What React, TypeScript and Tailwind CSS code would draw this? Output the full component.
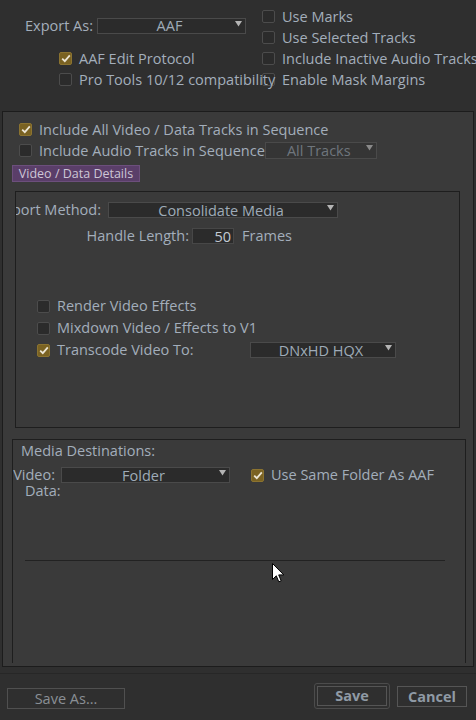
import React from 'react'

const font = { fontFamily: '"Open Sans", "Noto Sans", sans-serif' }

function Check({ checked }: { checked?: boolean }) {
  if (checked) {
    return (
      <span className="flex h-[13px] w-[13px] shrink-0 items-center justify-center rounded-[2px] border border-[#8b7330] bg-[#7a6222]">
        <svg width="10" height="9" viewBox="0 0 10 9">
          <path d="M1.2 4.6 L3.8 7.2 L8.8 1.4" fill="none" stroke="#ece6d6" strokeWidth="1.8" />
        </svg>
      </span>
    )
  }
  return <span className="h-[13px] w-[13px] shrink-0 rounded-[2px] border border-[#4c4c4c] bg-[#2b2b2b]" />
}

function Arrow({ dim }: { dim?: boolean }) {
  return (
    <svg className="absolute right-[3px] top-[2px]" width="7" height="6" viewBox="0 0 7 6">
      <path d="M0 0 L7 0 L3.5 5.5 Z" fill={dim ? '#8a8a8a' : '#b4b4b4'} />
    </svg>
  )
}

function Dropdown({ label, className, dim }: { label: string; className: string; dim?: boolean }) {
  return (
    <div
      className={`relative flex shrink-0 items-center justify-center border leading-none ${
        dim ? 'border-[#4a4a4a] bg-[#353535] text-[#6f767d]' : 'border-[#4a4a4a] bg-[#2b2b2b] text-[#9fabb8]'
      } ${className}`}
    >
      <span className="pr-[4px] pt-[2px]">{label}</span>
      <Arrow dim={dim} />
    </div>
  )
}

function CheckRow({ label, checked, className = '' }: { label: string; checked?: boolean; className?: string }) {
  return (
    <div className={`flex items-center gap-[7px] whitespace-nowrap ${className}`}>
      <Check checked={checked} />
      <span>{label}</span>
    </div>
  )
}

export default function App() {
  return (
    <div
      className="relative h-[720px] w-[476px] overflow-hidden bg-[#2f2f2f] text-[14.5px] leading-[20px] text-[#a3aebb]"
      style={font}
    >
      {/* top options */}
      <div className="flex h-[111px]">
        <div className="relative z-10 w-[262px] shrink-0 pl-[25px] pt-[15px]">
          <div className="flex h-[21px] items-center">
            <span className="w-[72px] whitespace-nowrap">Export As:</span>
            <Dropdown label="AAF" className="h-[16px] w-[149px]" />
          </div>
          <div className="mt-[12px] pl-[34px]">
            <CheckRow label="AAF Edit Protocol" checked className="h-[21px]" />
            <CheckRow label="Pro Tools 10/12 compatibility" className="h-[21px]" />
          </div>
        </div>
        <div className="pt-[6px]">
          <CheckRow label="Use Marks" className="h-[21px]" />
          <CheckRow label="Use Selected Tracks" className="h-[21px]" />
          <CheckRow label="Include Inactive Audio Tracks" className="h-[21px]" />
          <CheckRow label="Enable Mask Margins" className="h-[21px]" />
        </div>
      </div>

      {/* main panel */}
      <div className="ml-[2px] h-[556px] w-[472px] overflow-hidden border border-[#1c1c1c] bg-[#3a3a3a]">
        <div className="pl-[16px] pt-[7px]">
          <CheckRow label="Include All Video / Data Tracks in Sequence" checked className="h-[21px]" />
          <div className="flex h-[21px] items-center">
            <CheckRow label="Include Audio Tracks in Sequence" />
            <Dropdown label="All Tracks" dim className="h-[17px] w-[112px]" />
          </div>
        </div>

        <div className="ml-[9px] mt-[4px] flex h-[17px] w-[128px] items-center justify-center border border-[#6c4f7c] bg-[#5a3e69] pt-[1px] text-[12.5px] leading-none text-[#cdc6d6]">
          Video / Data Details
        </div>

        {/* video / data details box */}
        <div className="ml-[12px] mt-[9px] h-[237px] w-[445px] overflow-hidden border border-[#1e1e1e]">
          <div className="mt-[10px] flex h-[16px] items-center">
            <div className="flex w-[85px] shrink-0 justify-end">
              <span className="whitespace-nowrap">Export Method:</span>
            </div>
            <Dropdown label="Consolidate Media" className="ml-[7px] h-[16px] w-[230px]" />
          </div>
          <div className="mt-[10px] flex h-[16px] items-center">
            <div className="flex w-[173px] shrink-0 justify-end">
              <span className="whitespace-nowrap">Handle Length:</span>
            </div>
            <div className="ml-[3px] flex h-[16px] w-[42px] items-center justify-end border border-[#474747] bg-[#2b2b2b] pr-[2px] pt-[3px] leading-none text-[#c4ccd4]">
              50
            </div>
            <span className="ml-[8px]">Frames</span>
          </div>
          <div className="mt-[51px] pl-[21px]">
            <CheckRow label="Render Video Effects" className="h-[22px]" />
            <CheckRow label="Mixdown Video / Effects to V1" className="h-[22px]" />
            <div className="flex h-[22px] items-center">
              <Check checked />
              <span className="ml-[7px] w-[193px] whitespace-nowrap">Transcode Video To:</span>
              <Dropdown label="DNxHD HQX" className="h-[16px] w-[146px]" />
            </div>
          </div>
        </div>

        {/* media destinations box */}
        <div className="relative ml-[9px] mt-[11px] h-[224px] w-[454px] overflow-hidden border border-b-0 border-[#1e1e1e]">
          <div className="flex h-[21px] items-center pl-[8px]">Media Destinations:</div>
          <div className="mt-[6px] flex h-[16px] items-center">
            <div className="flex w-[42px] shrink-0 justify-end">
              <span className="whitespace-nowrap leading-[16px]">Video:</span>
            </div>
            <Dropdown label="Folder" className="ml-[6px] h-[16px] w-[169px]" />
            <CheckRow label="Use Same Folder As AAF" checked className="ml-[21px] leading-[16px]" />
          </div>
          <div className="flex h-[16px] items-center pl-[12px] leading-[16px]">Data:</div>
          <div className="ml-[12px] mt-[61px] h-px w-[420px] bg-[#222222]" />
        </div>
      </div>

      {/* footer */}
      <div className="mt-[6px] h-[47px] border-t border-[#272727]">
        <div className="flex items-start pt-[14px]">
          <button className="ml-[7px] h-[21px] w-[118px] border border-[#505050] pt-[1px] text-[14.5px] leading-none text-[#8a8f95]">
            Save As...
          </button>
          <div className="ml-auto mt-[-5px] rounded-[3px] border border-[#4c4c4c] p-[2px]">
            <button className="h-[20px] w-[70px] border border-[#555555] pt-[1px] text-[14.5px] font-bold leading-none text-[#8f9aa5]">
              Save
            </button>
          </div>
          <button className="ml-[7px] mr-[9px] mt-[-2px] h-[21px] w-[70px] border border-[#555555] pt-[1px] text-[14.5px] font-bold leading-none text-[#8f9aa5]">
            Cancel
          </button>
        </div>
      </div>

      {/* mouse pointer */}
      <svg className="absolute left-[272px] top-[563px]" width="13" height="20" viewBox="0 0 13 20">
        <path
          d="M0.5 0.5 L0.5 16.5 L4.3 12.8 L6.8 18.8 L9.2 17.8 L6.7 11.9 L11.8 11.9 Z"
          fill="#ffffff"
          stroke="#000000"
          strokeWidth="1"
        />
      </svg>
    </div>
  )
}
